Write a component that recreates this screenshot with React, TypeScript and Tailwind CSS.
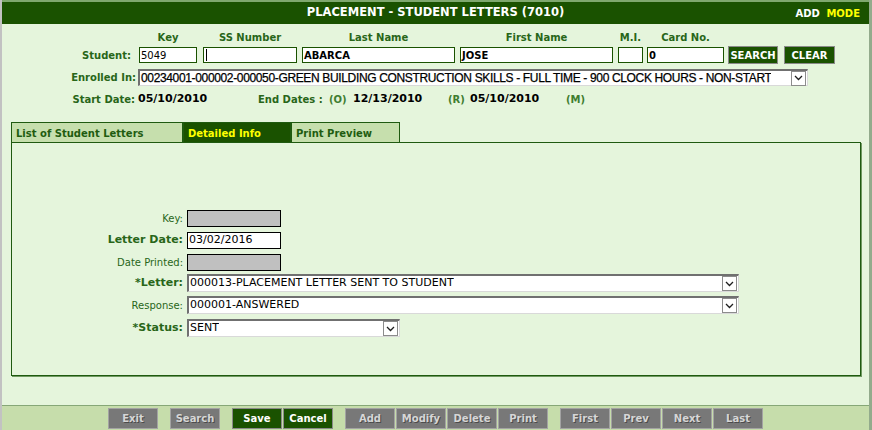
import React from "react";

const students = [
  { label: "Key", value: "5049", width: "w-[58px]", gap: "ml-0", bold: false },
  { label: "SS Number", value: "", width: "w-[94px]", gap: "ml-[6px]", bold: false, caret: true },
  { label: "Last Name", value: "ABARCA", width: "w-[153px]", gap: "ml-[5px]", bold: true },
  { label: "First Name", value: "JOSE", width: "w-[153px]", gap: "ml-[5px]", bold: true },
  { label: "M.I.", value: "", width: "w-[25px]", gap: "ml-[5px]", bold: false },
  { label: "Card No.", value: "0", width: "w-[77px]", gap: "ml-[4px]", bold: true },
];

const footerGroups = [
  [{ label: "Exit", on: false }],
  [{ label: "Search", on: false }],
  [
    { label: "Save", on: true },
    { label: "Cancel", on: true },
  ],
  [
    { label: "Add", on: false },
    { label: "Modify", on: false },
    { label: "Delete", on: false },
    { label: "Print", on: false },
  ],
  [
    { label: "First", on: false },
    { label: "Prev", on: false },
    { label: "Next", on: false },
    { label: "Last", on: false },
  ],
];

function Chevron() {
  return (
    <span className="flex h-[15px] w-[15px] shrink-0 items-center justify-center border border-[#8c8c8c] bg-white">
      <svg width="9" height="6" viewBox="0 0 9 6">
        <path d="M1 1 L4.5 4.5 L8 1" fill="none" stroke="#1e1e1e" strokeWidth="1.3" />
      </svg>
    </span>
  );
}

function FakeSelect({ value, className, textClass }: { value: string; className: string; textClass: string }) {
  return (
    <div
      className={`flex items-center justify-between border-t-2 border-l-2 border-b border-r border-t-[#707070] border-l-[#707070] border-b-[#d9d9d9] border-r-[#d9d9d9] bg-white pr-[1px] ${className}`}
    >
      <span className={`truncate pl-[1px] ${textClass}`}>{value}</span>
      <Chevron />
    </div>
  );
}

function FormRow({ label, bold, mt, children }: { label: string; bold?: boolean; mt: string; children: React.ReactNode }) {
  return (
    <div className={`flex items-center ${mt}`}>
      <div
        className={`w-[175px] pr-[4px] text-right text-[#286619] ${bold ? "text-[11px] font-bold" : "text-[10px]"}`}
      >
        {label}
      </div>
      {children}
    </div>
  );
}

export default function App() {
  return (
    <div className="flex h-[430px] w-[872px] flex-col overflow-hidden border-l-2 border-r-[3px] border-l-[#c2c2c2] border-r-[#93ab8c] bg-[#e5f5dc] font-['DejaVu_Sans',sans-serif]">
      <div className="h-[2px] bg-[#7fa86e]" />
      <div className="grid h-[22px] grid-cols-[1fr_auto_1fr] items-center bg-[#1a5200] text-white">
        <span />
        <span className="text-[11.5px] font-bold">PLACEMENT - STUDENT LETTERS (7010)</span>
        <span className="pr-[9px] text-right text-[10px] font-bold">
          ADD <span className="ml-[3px] text-[#ffff00]">MODE</span>
        </span>
      </div>

      {/* column headers */}
      <div className="mt-[6px] flex h-[14px] items-center text-[10px] font-bold text-[#286619]">
        <div className="w-[137px]" />
        {students.map((s) => (
          <div key={s.label} className={`${s.width} ${s.gap} text-center`}>
            {s.label}
          </div>
        ))}
      </div>

      <div className="mt-[2px] flex h-[18px] items-center">
        <div className="w-[137px] pr-[8px] text-right text-[10px] font-bold text-[#286619]">Student:</div>
        {students.map((s) => (
          <div
            key={s.label}
            className={`flex h-[16px] items-center border border-[#1a5200] bg-white px-[1px] text-[10px] text-black ${s.width} ${s.gap} ${s.bold ? "font-bold" : ""}`}
          >
            {s.caret && <span className="ml-[1px] h-[12px] w-[1px] bg-black" />}
            {s.value}
          </div>
        ))}
        <button className="ml-[4px] h-[18px] w-[50px] border border-[#8a8a8a] bg-[#1a5200] text-[10px] font-bold text-white">
          SEARCH
        </button>
        <button className="ml-[6px] h-[18px] w-[51px] border border-[#8a8a8a] bg-[#1a5200] text-[10px] font-bold text-white">
          CLEAR
        </button>
      </div>

      <div className="mt-[5px] flex items-center">
        <div className="w-[136px] pr-[2px] text-right text-[10px] font-bold text-[#286619]">Enrolled In:</div>
        <FakeSelect
          value="00234001-000002-000050-GREEN BUILDING CONSTRUCTION SKILLS - FULL TIME - 900 CLOCK HOURS - NON-START"
          className="h-[17px] w-[670px]"
          textClass="font-['Liberation_Sans',Arial,sans-serif] text-[12px] tracking-[-0.35px] text-black [-webkit-text-stroke:0.25px_#000]"
        />
      </div>

      <div className="mt-[6px] flex h-[14px] items-center text-[10px] font-bold">
        <div className="w-[134px] pr-[1px] text-right text-[#286619]">Start Date:</div>
        <div className="ml-[2px] w-[120px] text-[11px] text-black">05/10/2010</div>
        <div className="w-[71px] text-[#286619]">End Dates :</div>
        <div className="w-[24px] text-[#3f7d30]">(O)</div>
        <div className="w-[95px] text-[11px] text-black">12/13/2010</div>
        <div className="w-[22px] text-[#3f7d30]">(R)</div>
        <div className="w-[96px] text-[11px] text-black">05/10/2010</div>
        <div className="text-[#3f7d30]">(M)</div>
      </div>

      {/* tabs */}
      <div className="ml-[9px] mt-[16px] flex h-[21px] text-[10px] font-bold">
        <div className="flex w-[172px] items-center border border-[#1f5a10] bg-[#c6dfad] pl-[4px] pt-[1px] text-[#1f5c10]">
          List of Student Letters
        </div>
        <div className="flex w-[108px] items-center border border-[#1f5a10] bg-[#1a5200] pl-[4px] pt-[1px] text-[#ffff00]">
          Detailed Info
        </div>
        <div className="flex w-[109px] items-center border border-[#1f5a10] bg-[#c6dfad] pl-[4px] pt-[1px] text-[#1f5c10]">
          Print Preview
        </div>
      </div>

      <div className="-mt-px ml-[9px] flex h-[234px] w-[850px] flex-col border border-[#1f5a10] pt-[67px] shadow-[1px_1px_0_#6f9a60]">
        <FormRow label="Key:" mt="mt-0">
          <div className="h-[17px] w-[94px] border border-black bg-[#c0c0c0]" />
        </FormRow>
        <FormRow label="Letter Date:" bold mt="mt-[5px]">
          <div className="flex h-[17px] w-[94px] items-center border border-black bg-white pl-[1px] text-[11px] text-black">
            03/02/2016
          </div>
        </FormRow>
        <FormRow label="Date Printed:" mt="mt-[5px]">
          <div className="h-[17px] w-[94px] border border-black bg-[#c0c0c0]" />
        </FormRow>
        <FormRow label="*Letter:" bold mt="mt-[3px]">
          <FakeSelect
            value="000013-PLACEMENT LETTER SENT TO STUDENT"
            className="h-[18px] w-[552px]"
            textClass="text-[11px] text-black"
          />
        </FormRow>
        <FormRow label="Response:" mt="mt-[4px]">
          <FakeSelect value="000001-ANSWERED" className="h-[18px] w-[552px]" textClass="text-[11px] text-black" />
        </FormRow>
        <FormRow label="*Status:" bold mt="mt-[5px]">
          <FakeSelect value="SENT" className="h-[18px] w-[213px]" textClass="text-[11px] text-black" />
        </FormRow>
      </div>

      {/* footer buttons */}
      <div className="mt-auto flex h-[25px] items-start gap-[12px] border-t border-t-[#86a777] bg-[#c6ddab] pl-[106px] pt-[2px]">
        {footerGroups.map((group, i) => (
          <div key={i} className="flex gap-[1px]">
            {group.map((b) =>
              b.on ? (
                <button
                  key={b.label}
                  className="h-[21px] w-[50px] border border-[#8a8a8a] bg-[#1a5200] text-[10px] font-bold text-white"
                >
                  {b.label}
                </button>
              ) : (
                <button
                  key={b.label}
                  className="h-[21px] w-[50px] border border-[#a3a3a3] bg-[#787878] text-[10px] font-bold text-[#d6d6d6] [text-shadow:1px_1px_0_#4b4b4b]"
                >
                  {b.label}
                </button>
              )
            )}
          </div>
        ))}
      </div>
    </div>
  );
}
